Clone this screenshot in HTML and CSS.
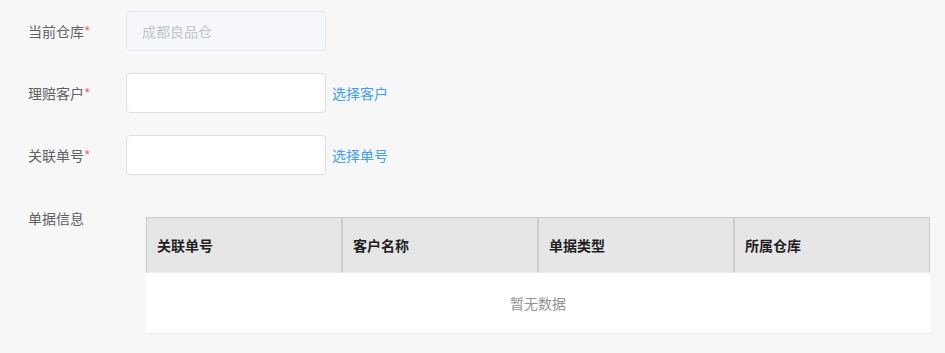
FILE: index.html
```html
<!DOCTYPE html>
<html>
<head>
<meta charset="utf-8">
<link rel="stylesheet" href="styles.css">
</head>
<body>

<div class="form">
  <div class="form-item">
    <label class="form-label">当前仓库<span class="req">*</span></label>
    <div class="form-content">
      <input class="input" type="text" value="成都良品仓" disabled>
    </div>
  </div>

  <div class="form-item">
    <label class="form-label">理赔客户<span class="req">*</span></label>
    <div class="form-content">
      <input class="input" type="text">
      <a class="link" href="#">选择客户</a>
    </div>
  </div>

  <div class="form-item">
    <label class="form-label">关联单号<span class="req">*</span></label>
    <div class="form-content">
      <input class="input" type="text">
      <a class="link" href="#">选择单号</a>
    </div>
  </div>

  <div class="form-item info">
    <label class="form-label">单据信息</label>
    <div class="table-wrap">
      <table class="grid">
        <tr>
          <th>关联单号</th>
          <th>客户名称</th>
          <th>单据类型</th>
          <th>所属仓库</th>
        </tr>
        <tr>
          <td class="empty" colspan="4">暂无数据</td>
        </tr>
      </table>
    </div>
  </div>
</div>

</body>
</html>
```

FILE: styles.css
```css
body {
    margin: 0;
    background-color: #f7f7f7;
    font-family: "Noto Sans CJK SC", "Noto Sans", sans-serif;
    font-size: 14px;
    color: #606266;
}

.form {
    padding: 11px 15px 0 28px;
}

/* one row of the form */
.form-item {
    display: flex;
    align-items: center;
    height: 40px;
    margin-bottom: 22px;
}

.form-label {
    width: 98px;
    line-height: 40px;
}

.req {
    color: #f56c6c;
}

.form-content {
    display: flex;
    align-items: center;
}

.input {
    box-sizing: border-box;
    width: 200px;
    height: 40px;
    padding: 0 15px;
    border: 1px solid #dcdfe6;
    border-radius: 4px;
    background-color: #fff;
    font-family: inherit;
    font-size: 14px;
    color: #606266;
    outline: none;
}

.input:disabled {
    background-color: #f5f7fa;
    border-color: #e4e7ed;
    color: #c0c4cc;
}

.link {
    margin-left: 6px;
    color: #409eff;
    text-decoration: none;
}

/* document info block */
.form-item.info {
    align-items: flex-start;
    height: auto;
    margin-top: 33px;
}

.form-item.info .form-label {
    line-height: 20px;
}

.table-wrap {
    flex: 1;
    padding: 9px 0 0 20px;
}

table.grid {
    width: 100%;
    border-collapse: separate;
    border-spacing: 0;
    table-layout: fixed;
}

table.grid th {
    height: 54px;
    padding: 0 10px;
    border: 1px solid #cbcbcb;
    border-bottom: 1px solid #ebeef5;
    background-color: #e6e6e6;
    text-align: left;
    font-weight: bold;
    color: #1f1f1f;
}

table.grid td.empty {
    height: 58px;
    background-color: #fff;
    border-bottom: 1px solid #ebeef5;
    text-align: center;
    color: #909399;
}
```
